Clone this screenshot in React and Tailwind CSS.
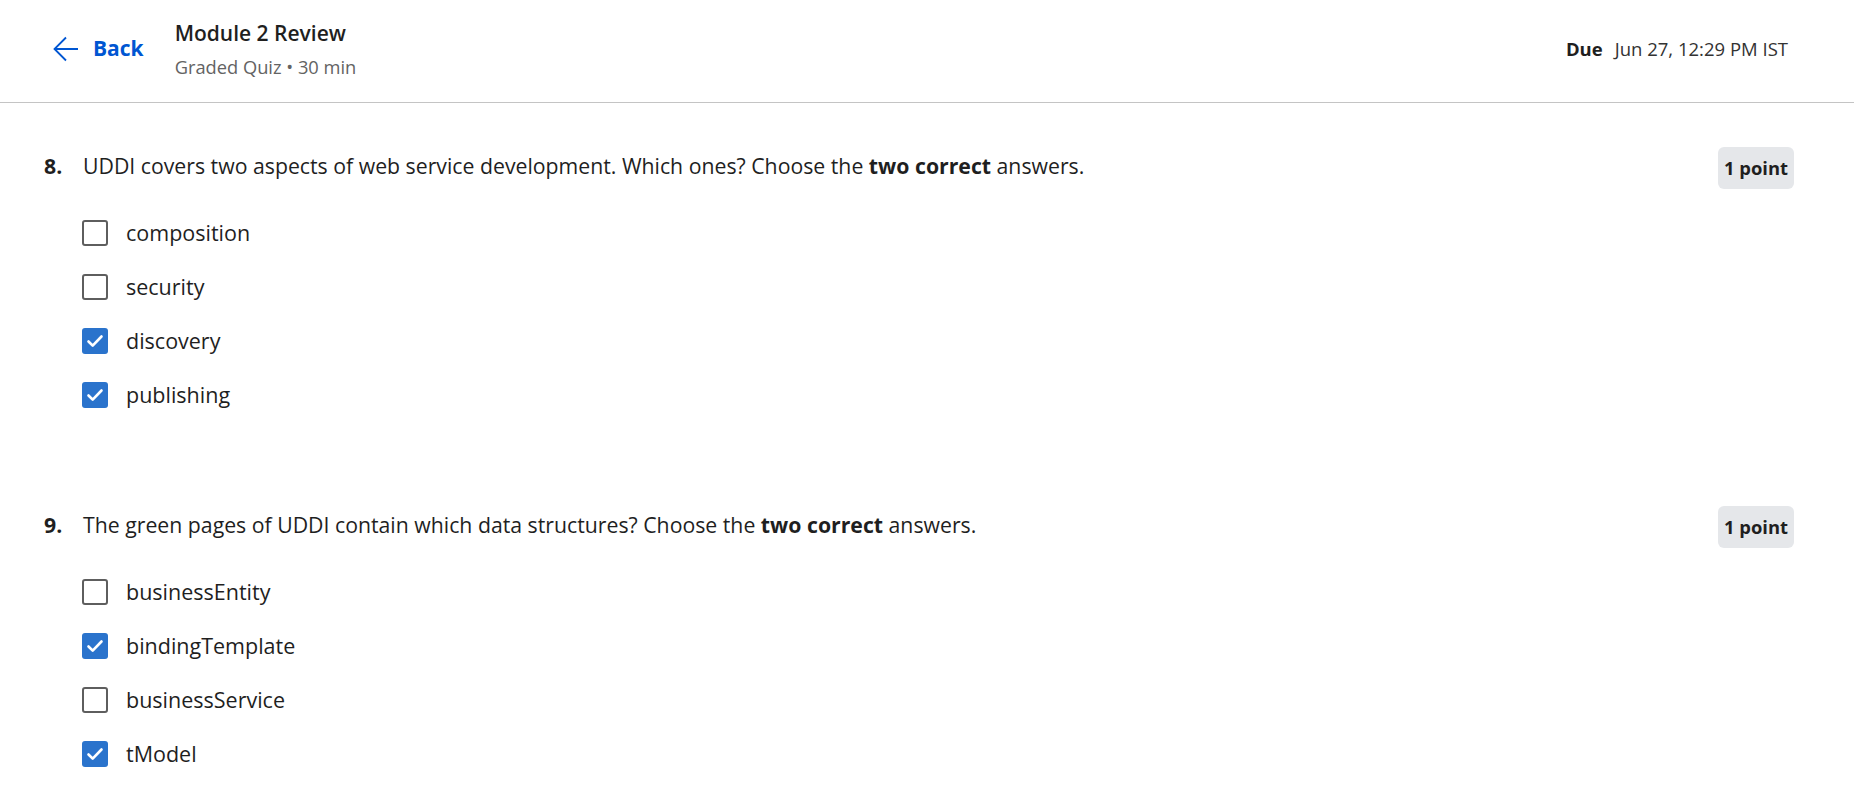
import React from 'react';

const questions = [
  {
    num: '8.',
    before: 'UDDI covers two aspects of web service development. Which ones? Choose the ',
    after: ' answers.',
    options: [
      { label: 'composition', checked: false },
      { label: 'security', checked: false },
      { label: 'discovery', checked: true },
      { label: 'publishing', checked: true },
    ],
  },
  {
    num: '9.',
    before: 'The green pages of UDDI contain which data structures? Choose the ',
    after: ' answers.',
    options: [
      { label: 'businessEntity', checked: false },
      { label: 'bindingTemplate', checked: true },
      { label: 'businessService', checked: false },
      { label: 'tModel', checked: true },
    ],
  },
];

function Checkbox({ checked }) {
  if (checked) {
    return (
      <span className="w-[26px] h-[26px] rounded-[3px] bg-[#2a73cc] flex items-center justify-center shrink-0">
        <svg width="20" height="20" viewBox="0 0 20 20" fill="none">
          <path d="M3.5 10.5l4.2 4.2 8.8-9.2" stroke="white" strokeWidth="2.6" strokeLinecap="round" strokeLinejoin="round" />
        </svg>
      </span>
    );
  }
  return <span className="w-[26px] h-[26px] rounded-[3px] border-[2.5px] border-[#5e5e5e] bg-white shrink-0" />;
}

function Question({ q, first }) {
  return (
    <section className={first ? '' : 'mt-[97px]'}>
      <div className="flex items-start justify-between">
        <div className="flex mt-[5px] text-[21.25px] leading-[28px] text-[#1f1f1f]">
          <span className="w-[39px] font-bold">{q.num}</span>
          <p>
            {q.before}
            <b className="font-bold">two correct</b>
            {q.after}
          </p>
        </div>
        <span className="h-[42px] px-[6px] rounded-md bg-[#e5e7ea] flex items-center text-[18.4px] font-bold text-[#1f1f1f]">
          1 point
        </span>
      </div>
      <ul className="mt-[30px] ml-[38px] flex flex-col gap-[26px]">
        {q.options.map((o) => (
          <li key={o.label} className="flex items-center h-[28px] gap-[18px]">
            <Checkbox checked={o.checked} />
            <span className="text-[21.5px] text-[#1f1f1f]">{o.label}</span>
          </li>
        ))}
      </ul>
    </section>
  );
}

export default function App() {
  return (
    <div className="min-h-screen bg-white font-['Open_Sans',sans-serif]">
      <header className="border-b border-[#c4c4c4] flex items-center justify-between pt-[19px] pb-[23px] pl-[53px] pr-[66px]">
        <div className="flex items-center">
          <a href="#" className="flex items-center gap-[14px] text-[#0056d2] font-bold text-[21px]">
            <svg width="26" height="26" viewBox="0 0 26 26" fill="none">
              <path d="M25 13H1.5M13 1.5L1.5 13 13 24.5" stroke="#0056d2" strokeWidth="1.8" />
            </svg>
            Back
          </a>
          <div className="ml-[31px]">
            <div className="text-[21px] leading-[28px] font-semibold text-[#1f1f1f]">Module 2 Review</div>
            <div className="mt-2 text-[18.3px] leading-[24px] text-[#636363]">Graded Quiz • 30 min</div>
          </div>
        </div>
        <div className="text-[18.5px] text-[#333]">
          <span className="font-bold text-[#1f1f1f]">Due</span>
          <span className="ml-[12px]">Jun 27, 12:29 PM IST</span>
        </div>
      </header>
      <main className="pt-[44px] pl-[44px] pr-[60px] pb-10">
        {questions.map((q, i) => (
          <Question key={q.num} q={q} first={i === 0} />
        ))}
      </main>
    </div>
  );
}
